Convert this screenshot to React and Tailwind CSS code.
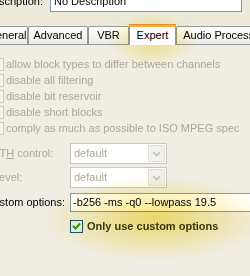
const font = { fontFamily: '"Liberation Sans", Arial, sans-serif' };

function DisabledBox() {
  return <span className="block w-[13px] h-[13px] border border-[#cac8bb] bg-[#f4f3ee] shrink-0" />;
}

function Chevron({ color = '#c3c1b4' }) {
  return (
    <svg width="9" height="6" viewBox="0 0 9 6">
      <path d="M1 1 L4.5 4.5 L8 1" fill="none" stroke={color} strokeWidth="1.6" />
    </svg>
  );
}

function Combo({ value }) {
  return (
    <div className="flex w-[97px] h-[21px] border border-[#c9c7ba] bg-white">
      <span className="flex-1 pl-[3px] leading-[19px] text-[#aca899]">{value}</span>
      <span className="w-[17px] m-px flex items-center justify-center bg-[#f1f0ea] border border-[#e2e0d6]">
        <Chevron />
      </span>
    </div>
  );
}

function Tab({ label, active, w }) {
  if (active) {
    return (
      <div className={`${w} h-[21px] -mb-px relative z-10 flex flex-col border-x border-[#919b9c] bg-[#fcfcfe] shrink-0`}>
        <div className="h-[3px] bg-[#f0b040] border-t border-[#e68b2c] -mx-px" />
        <div className="flex-1 flex items-center justify-center pb-[1px]">{label}</div>
      </div>
    );
  }
  return (
    <div
      className={`${w} h-[18px] mt-[3px] flex items-center justify-center border border-b-0 border-[#919b9c] bg-gradient-to-b from-white to-[#ecebe6] rounded-t-[2px] shrink-0`}
    >
      {label}
    </div>
  );
}

export default function App() {
  const opts = [
    'allow block types to differ between channels',
    'disable all filtering',
    'disable bit reservoir',
    'disable short blocks',
    'comply as much as possible to ISO MPEG spec',
  ];

  return (
    <div className="relative w-[250px] h-[276px] overflow-hidden bg-[#ece9d8] text-[11px] text-black whitespace-nowrap" style={font}>
      <div className="flex items-end -mt-[9px] h-[21px]">
        <span className="w-[43px] pb-[3px] flex justify-end shrink-0">Description:</span>
        <div className="ml-[7px] w-[192px] h-[21px] border border-[#7f9db9] bg-white pl-[3px] leading-[19px] shrink-0">No Description</div>
      </div>

      <div className="flex items-end mt-[10px] h-[22px] -ml-[14px]">
        <Tab label="General" w="w-[42px]" />
        <Tab label="Advanced" w="w-[60px]" />
        <Tab label="VBR" w="w-[41px]" />
        <Tab label="Expert" w="w-[47px]" active />
        <Tab label="Audio Processing" w="w-[100px]" />
      </div>

      <div className="border-t border-[#919b9c] bg-[#f0eee4] h-[240px] -ml-[9px] pt-[13px]">
        <div className="flex flex-col gap-[3px]">
          {opts.map((o) => (
            <div key={o} className="flex items-center h-[13px] text-[#aca899]">
              <DisabledBox />
              <span className="ml-[2px]">{o}</span>
            </div>
          ))}
        </div>

        <div className="flex flex-col gap-[3px] mt-[8px] ml-[2px]">
          <div className="flex items-center">
            <span className="w-[77px] text-[#aca899] shrink-0">
              AT<span className="underline">H</span> control:
            </span>
            <Combo value="default" />
          </div>
          <div className="flex items-center">
            <span className="w-[77px] text-[#aca899] shrink-0">Level:</span>
            <Combo value="default" />
          </div>
          <div className="flex items-center mt-[2px]">
            <span className="w-[77px] pr-[5px] flex justify-end shrink-0">Custom options:</span>
            <div className="w-[200px] h-[19px] border border-[#7f9db9] bg-white pl-[2px] leading-[17px] shrink-0">
              -b256 -ms -q0 --lowpass 19.5
            </div>
          </div>
          <div className="flex items-center gap-[4px] ml-[77px] mt-[3px]">
            <span className="w-[13px] h-[13px] border border-[#1c5180] bg-[#eef0e8] flex items-center justify-center shrink-0">
              <svg width="9" height="9" viewBox="0 0 9 9">
                <path d="M1 4 L3.5 6.5 L8 1.5" fill="none" stroke="#21a121" strokeWidth="2" />
              </svg>
            </span>
            <span className="font-bold text-[#3a3a08]">Only use custom options</span>
          </div>
        </div>
      </div>

      <div className="pointer-events-none absolute left-[105px] top-[12px] w-[95px] h-[55px] mix-blend-multiply bg-[radial-gradient(ellipse_at_center,rgba(250,232,120,0.85),rgba(250,232,120,0)_68%)]" />
      <div className="pointer-events-none absolute left-[40px] top-[176px] w-[230px] h-[85px] mix-blend-multiply bg-[radial-gradient(ellipse_at_center,rgba(248,228,110,0.95),rgba(248,228,110,0.4)_40%,rgba(248,228,110,0)_70%)]" />
    </div>
  );
}
